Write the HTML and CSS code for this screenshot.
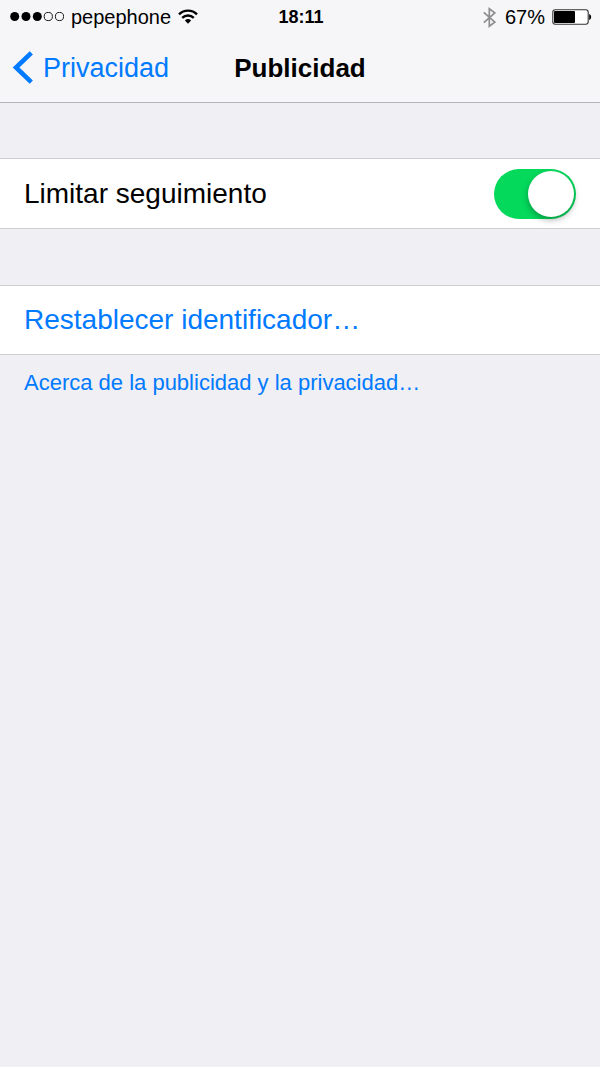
FILE: index.html
```html
<!DOCTYPE html>
<html lang="es">
<head>
<meta charset="utf-8">
<meta name="viewport" content="width=device-width, initial-scale=1">
<title>Publicidad</title>
<link rel="stylesheet" href="styles.css">
</head>
<body>
<header class="top">
  <div class="status">
    <div class="status-left">
      <svg class="signal" width="54" height="10" viewBox="0 0 54 10" aria-hidden="true">
        <circle cx="4.7" cy="4.5" r="4.5"/><circle cx="16" cy="4.5" r="4.5"/><circle cx="27.3" cy="4.5" r="4.5"/>
        <g fill="none" stroke="#000" stroke-width=".9"><circle cx="38.3" cy="4.5" r="4.1"/><circle cx="49.5" cy="4.5" r="4.1"/></g>
      </svg>
      <span>pepephone</span>
      <svg class="wifi" width="20" height="16" viewBox="0 0 20 16" aria-hidden="true">
        <g fill="none" stroke="#000" stroke-width="2.4"><path d="M1 5.3a12.8 12.8 0 0 1 18 0"/><path d="M4.2 8.9a8.3 8.3 0 0 1 11.6 0"/></g>
        <path d="M6.9 11.5a4.6 4.6 0 0 1 6.2 0L10 14.7z"/>
      </svg>
    </div>
    <time class="clock">18:11</time>
    <div class="status-right">
      <svg class="bluetooth" width="13" height="21" viewBox="0 0 13 21" fill="none" stroke="#8e8e90" stroke-width="1.7" aria-hidden="true"><path d="M.8 5.3l11 9.8-5.5 4.2V1.7l5.5 4.2-11 9.8"/></svg>
      <span>67%</span>
      <svg class="battery" width="40" height="17" viewBox="0 0 40 17" aria-hidden="true">
        <rect x=".8" y=".8" width="35.4" height="14.4" rx="2.5" fill="#fff" stroke="#333" stroke-width="1.1"/>
        <rect x="2" y="2" width="21" height="12" rx="1"/>
        <path d="M37.2 5c2.6.8 2.6 5.2 0 6z"/>
      </svg>
    </div>
  </div>
  <nav class="nav">
    <a class="back" href="#privacidad">
      <svg width="21" height="34" viewBox="0 0 21 34" fill="none" stroke="currentColor" stroke-width="4.6" aria-hidden="true"><path d="M19.3 1.8L4 16.5l15.3 14.7"/></svg>
      <span>Privacidad</span>
    </a>
    <h1 class="title">Publicidad</h1>
  </nav>
</header>
<main class="settings">
  <div class="row">
    <label for="limit">Limitar seguimiento</label>
    <input class="switch" type="checkbox" role="switch" id="limit" checked>
  </div>
  <button class="row action" type="button">Restablecer identificador…</button>
  <a class="about" href="#acerca">Acerca de la publicidad y la privacidad…</a>
</main>
</body>
</html>
```
FILE: styles.css
```css
* {
  box-sizing: border-box;
}

body {
  margin: 0;
  min-height: 100vh;
  background: #efeff4;
  color: #000;
  font-family: "Liberation Sans", Arial, sans-serif;
}

.top {
  background: #f6f6f8;
  border-bottom: 1px solid #b5b5b9;
}

.status,
.nav {
  display: grid;
  grid-template-columns: 1fr auto 1fr;
  align-items: center;
}

.status {
  height: 34px;
  padding: 0 8px 0 10px;
  font-size: 20px;
}

.status-left,
.status-right {
  display: flex;
  align-items: center;
  gap: 7px;
}

.status-right {
  justify-content: flex-end;
}

.bluetooth {
  margin-right: 2px;
}

.clock {
  font-size: 18px;
  font-weight: bold;
}

.nav {
  height: 68px;
  padding: 0 12px;
  font-size: 27px;
}

.back {
  display: flex;
  align-items: center;
  gap: 10px;
  color: #007aff;
  text-decoration: none;
}

.title {
  margin: 0;
  font-size: 26px;
}

.settings {
  display: flex;
  flex-direction: column;
  padding-top: 55px;
}

.row {
  display: flex;
  align-items: center;
  justify-content: space-between;
  min-height: 71px;
  margin: 0 0 56px;
  padding: 0 24px;
  background: #fff;
  border: solid #cdcdd2;
  border-width: 1px 0;
  font-size: 28px;
}

.action {
  min-height: 70px;
  margin-bottom: 0;
  color: #007aff;
  font-family: inherit;
  text-align: left;
}

.switch {
  appearance: none;
  display: flex;
  align-items: center;
  width: 82px;
  height: 50px;
  margin: 0;
  padding: 2px;
  border-radius: 25px;
  background: #d8d8dc;
}

.switch::before {
  content: "";
  width: 46px;
  height: 46px;
  border-radius: 50%;
  background: #fff;
  box-shadow: 0 3px 6px rgba(0, 0, 0, 0.3);
}

.switch:checked {
  justify-content: flex-end;
  background: #04d95c;
}

.about {
  align-self: flex-start;
  padding: 15px 24px;
  color: #007aff;
  font-size: 22px;
  line-height: 25px;
  text-decoration: none;
}
```
